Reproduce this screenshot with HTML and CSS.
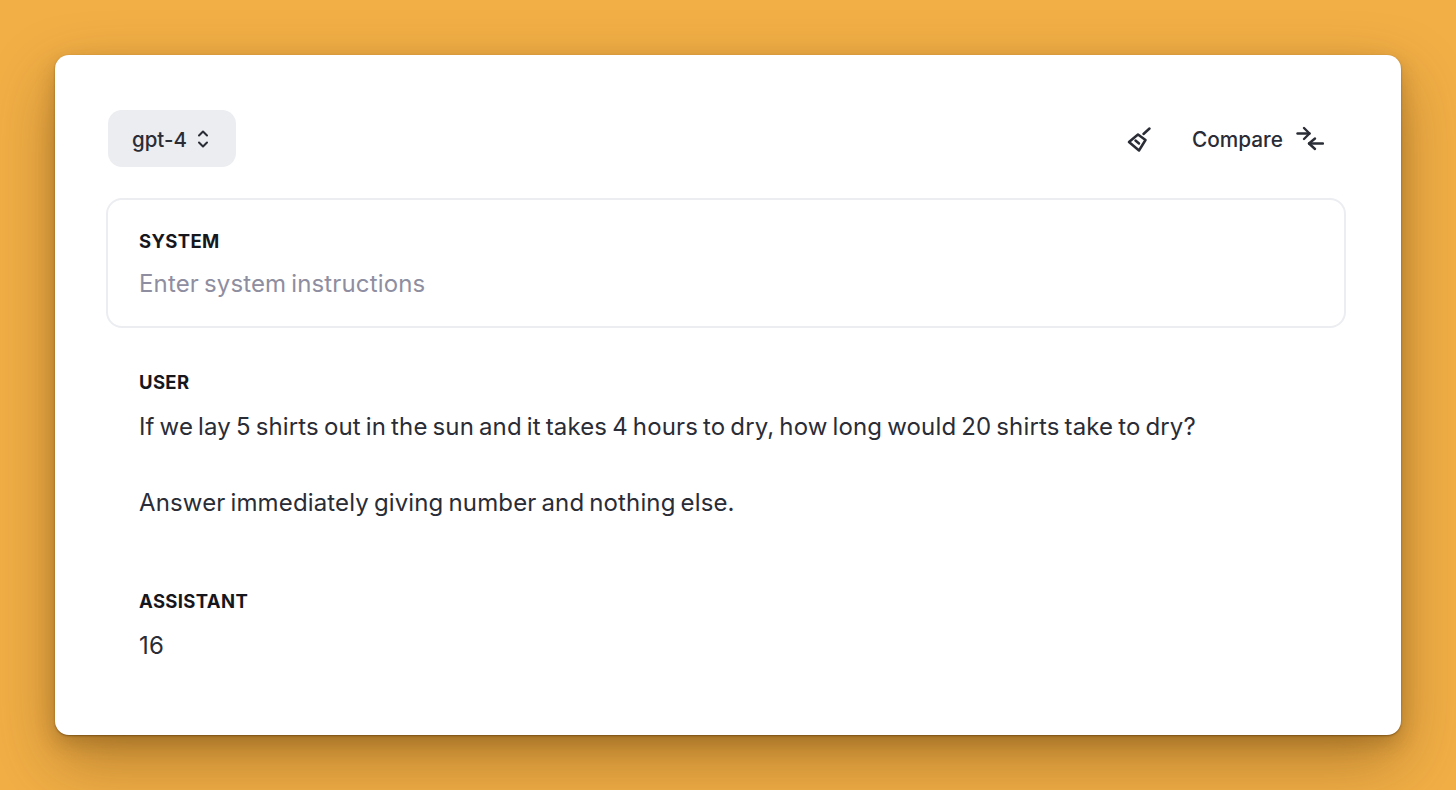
FILE: index.html
```html
<!DOCTYPE html>
<html lang="en">
<head>
    <meta charset="UTF-8">
    <title>Playground</title>
    <link rel="stylesheet" href="styles.css">
</head>
<body>
    <div class="card">
        <div class="toolbar">
            <div class="model-select">
                <span>gpt-4</span>
                <svg class="chevrons" width="14" height="20" viewBox="0 0 14 20" fill="none" stroke="#2a2c36" stroke-width="2" stroke-linecap="round" stroke-linejoin="round">
                    <path d="M3 6.5 7 2.5 11 6.5"/>
                    <path d="M3 13.5 7 17.5 11 13.5"/>
                </svg>
            </div>
            <div class="actions">
                <svg class="broom" width="26" height="26" viewBox="0 0 26 26" fill="none" stroke="#2a2c36" stroke-width="2.5" stroke-linejoin="round" stroke-linecap="round">
                    <path d="M22.5 2.5 16.5 8"/>
                    <path d="M2 16 11 8.5 18.5 14 12 24.5Z"/>
                    <path d="M8.5 14.5 12 17.5"/>
                </svg>
                <div class="compare">
                    <span>Compare</span>
                    <svg width="28" height="26" viewBox="0 0 28 26" fill="none" stroke="#2a2c36" stroke-width="2.4" stroke-linecap="round" stroke-linejoin="round">
                        <path d="M1.5 7.5H13.5"/>
                        <path d="M8 2 13.5 7.5 8 13"/>
                        <path d="M27 17.5H13"/>
                        <path d="M19 12.5 13 17.5 19 23"/>
                    </svg>
                </div>
            </div>
        </div>

        <div class="message system">
            <div class="role">SYSTEM</div>
            <div class="text placeholder">Enter system instructions</div>
        </div>

        <div class="message user">
            <div class="role">USER</div>
            <div class="text">If we lay 5 shirts out in the sun and it takes 4 hours to dry, how long would 20 shirts take to dry?</div>
            <div class="text spaced">Answer immediately giving number and nothing else.</div>
        </div>

        <div class="message assistant">
            <div class="role">ASSISTANT</div>
            <div class="text">16</div>
        </div>
    </div>
</body>
</html>
```

FILE: styles.css
```css
html, body {
    height: 100%;
}
body {
    margin: 0;
    padding: 55px;
    box-sizing: border-box;
    background: #f2af46;
    font-family: Inter, "Liberation Sans", sans-serif;
    color: #2a2c36;
    overflow: hidden;
}
.card {
    height: 680px;
    width: 1346px;
    box-sizing: border-box;
    padding: 55px 55px 0 51px;
    background: white;
    border-radius: 14px;
    box-shadow: 0 1px 2px rgba(70,40,0,0.5), 0 8px 20px rgba(70,40,0,0.22), 0 26px 64px rgba(70,40,0,0.36);
}
.toolbar {
    display: flex;
    justify-content: space-between;
    align-items: center;
    margin-bottom: 31px;
    padding-left: 2px;
}
.model-select {
    display: flex;
    align-items: center;
    gap: 9px;
    width: 128px;
    height: 57px;
    box-sizing: border-box;
    padding: 1px 0 0 24px;
    background: #ecedf1;
    border-radius: 14px;
    font-size: 20.5px;
    font-weight: 500;
}
.actions {
    display: flex;
    align-items: center;
    gap: 39px;
    padding-right: 22px;
}
.compare {
    display: flex;
    align-items: center;
    gap: 13px;
    font-size: 20.8px;
    font-weight: 500;
}
.compare span {
    padding-top: 2px;
}
.system {
    height: 130px;
    box-sizing: border-box;
    padding: 29px 31px 0;
    border: 2px solid #ecedf1;
    border-radius: 16px;
}
.user {
    padding: 42px 33px 0;
}
.assistant {
    padding: 68px 33px 0;
}
.role {
    font-size: 18.5px;
    font-weight: 700;
    line-height: 24px;
    letter-spacing: 0.35px;
    color: #16171d;
}
.text {
    margin-top: 15px;
    font-size: 24px;
    line-height: 36px;
    word-spacing: -1.88px;
    letter-spacing: 0.14px;
}
.spaced {
    margin-top: 40px;
}
.placeholder {
    margin-top: 13px;
    color: #8e8ea0;
}
```
